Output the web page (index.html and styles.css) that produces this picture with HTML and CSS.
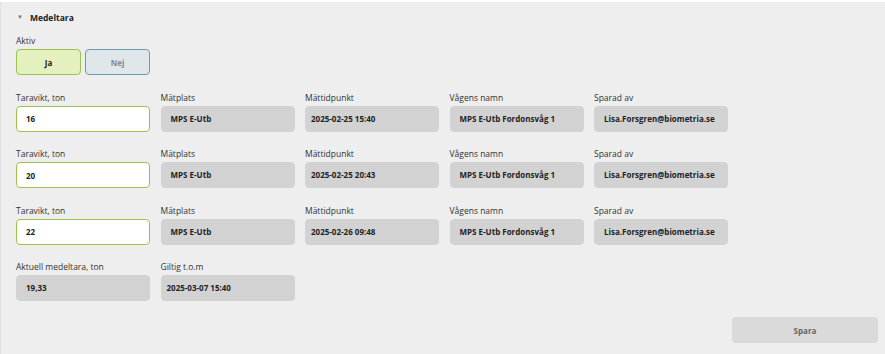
FILE: index.html
```html
<!DOCTYPE html>
<html>
<head>
    <title>Medeltara</title>
    <link rel="stylesheet" href="styles.css">
</head>
<body>
    <div class="panel">
        <div class="panel-header">
            <span class="caret">&#9660;</span>
            <span class="panel-title">Medeltara</span>
        </div>

        <div class="field">
            <div class="label">Aktiv</div>
            <div class="toggle">
                <button class="toggle-btn on">Ja</button>
                <button class="toggle-btn off">Nej</button>
            </div>
        </div>

        <div class="row">
            <div class="field">
                <div class="label">Taravikt, ton</div>
                <input class="input" type="text" value="16">
            </div>
            <div class="field">
                <div class="label">Mätplats</div>
                <div class="value">MPS E-Utb</div>
            </div>
            <div class="field">
                <div class="label">Mättidpunkt</div>
                <div class="value date">2025-02-25 15:40</div>
            </div>
            <div class="field">
                <div class="label">Vågens namn</div>
                <div class="value">MPS E-Utb Fordonsvåg 1</div>
            </div>
            <div class="field">
                <div class="label">Sparad av</div>
                <div class="value">Lisa.Forsgren@biometria.se</div>
            </div>
        </div>

        <div class="row">
            <div class="field">
                <div class="label">Taravikt, ton</div>
                <input class="input" type="text" value="20">
            </div>
            <div class="field">
                <div class="label">Mätplats</div>
                <div class="value">MPS E-Utb</div>
            </div>
            <div class="field">
                <div class="label">Mättidpunkt</div>
                <div class="value date">2025-02-25 20:43</div>
            </div>
            <div class="field">
                <div class="label">Vågens namn</div>
                <div class="value">MPS E-Utb Fordonsvåg 1</div>
            </div>
            <div class="field">
                <div class="label">Sparad av</div>
                <div class="value">Lisa.Forsgren@biometria.se</div>
            </div>
        </div>

        <div class="row">
            <div class="field">
                <div class="label">Taravikt, ton</div>
                <input class="input" type="text" value="22">
            </div>
            <div class="field">
                <div class="label">Mätplats</div>
                <div class="value">MPS E-Utb</div>
            </div>
            <div class="field">
                <div class="label">Mättidpunkt</div>
                <div class="value date">2025-02-26 09:48</div>
            </div>
            <div class="field">
                <div class="label">Vågens namn</div>
                <div class="value">MPS E-Utb Fordonsvåg 1</div>
            </div>
            <div class="field">
                <div class="label">Sparad av</div>
                <div class="value">Lisa.Forsgren@biometria.se</div>
            </div>
        </div>

        <div class="row">
            <div class="field">
                <div class="label">Aktuell medeltara, ton</div>
                <div class="value">19,33</div>
            </div>
            <div class="field">
                <div class="label">Giltig t.o.m</div>
                <div class="value date">2025-03-07 15:40</div>
            </div>
        </div>

        <div class="actions">
            <button class="save">Spara</button>
        </div>
    </div>
</body>
</html>
```

FILE: styles.css
```css
body { margin: 0; background: #fff; font-family: "Open Sans", sans-serif; color: #222; }
.panel { margin-top: 2px; height: 352px; box-sizing: border-box; background: #eeeeee; border-left: 1px solid #e2e2e2; padding: 8px 7px 0 15px; }
.panel-header { display: flex; align-items: center; gap: 7px; line-height: 15px; margin-bottom: 10px; }
.caret { font-size: 6px; color: #777; margin-left: 1px; }
.panel-title { font-size: 8.5px; font-weight: 700; color: #222; }
.label { font-size: 8.5px; line-height: 12px; margin-bottom: 2px; color: #333; }
.toggle { display: flex; gap: 4px; }
.toggle-btn { width: 65px; height: 26px; border-radius: 4px; font-family: "Open Sans", sans-serif; font-size: 8px; font-weight: 700; box-sizing: border-box; }
.toggle-btn.on { background: #e5f0bf; border: 1px solid #9cc34c; color: #222; }
.toggle-btn.off { background: #dfe7eb; border: 1px solid #6c9bb1; color: #888; }
.row { display: flex; gap: 10.5px; margin-top: 16.5px; }
.row:first-of-type { margin-top: 17px; }
.field { width: 134px; }
.input, .value { width: 134px; height: 26px; box-sizing: border-box; border-radius: 4px; font-family: "Open Sans", sans-serif; font-size: 8px; font-weight: 700; line-height: 24px; padding: 0 9px; color: #222; }
.input { display: block; background: #fff; border: 1px solid #9cc34c; outline: none; }
.value { background: #d2d2d2; border: 1px solid #d2d2d2; white-space: nowrap; }
.value.date { padding: 0 5px; }
.actions { display: flex; justify-content: flex-end; margin-top: 16px; }
.save { width: 146px; height: 26px; border: none; border-radius: 4px; background: #dadada; color: #666; font-family: "Open Sans", sans-serif; font-size: 8px; font-weight: 700; }
```
